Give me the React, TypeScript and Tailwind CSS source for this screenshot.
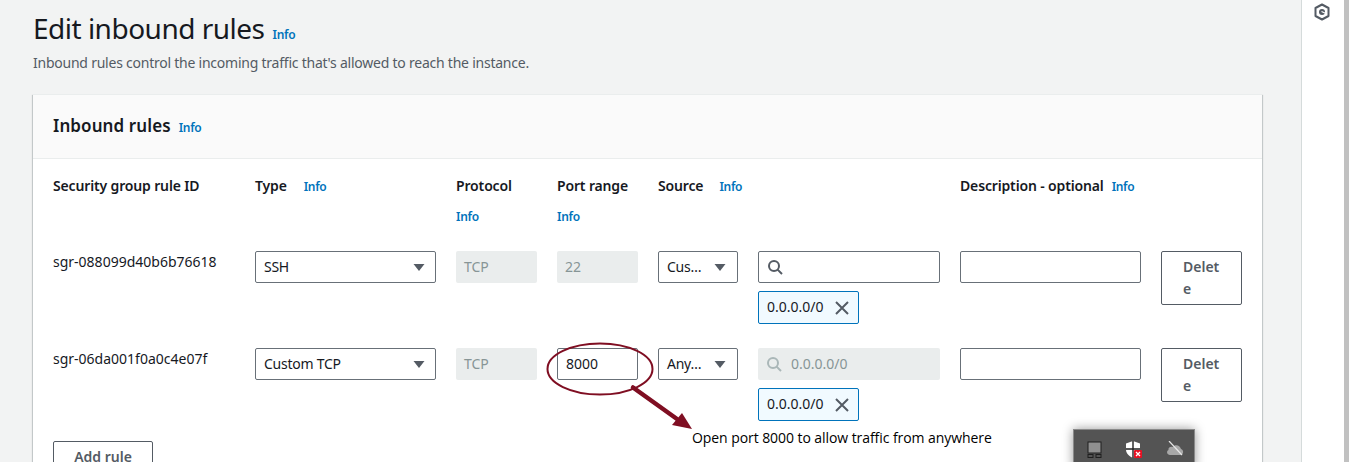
import * as React from 'react';

// Small blue "Info" link used next to every heading
const Info = ({ className = '' }: { className?: string }) => (
  <span className={`text-[12px] leading-[18px] font-semibold tracking-[-0.3px] text-[#0073bb] ${className}`}>Info</span>
);

const Caret = () => (
  <svg width="14" height="9" viewBox="0 0 14 9" className="shrink-0">
    <path d="M1.500 1h11L7 8z" fill="#545b64" />
  </svg>
);

const Select = ({ label, compact = false }: { label: string; compact?: boolean }) => (
  <div
    className={`flex h-8 items-center justify-between rounded-[2px] border border-[#687078] bg-white text-[14px] tracking-[-0.25px] text-[#16191f] ${
      compact ? 'pl-2 pr-[10px]' : 'pl-2 pr-[9px]'
    }`}
  >
    <span className="-mt-[2px]">{label}</span>
    <Caret />
  </div>
);

const ReadOnly = ({ value }: { value: string }) => (
  <div className="flex h-8 items-center rounded-[2px] bg-[#eaeded] pb-[2px] pl-2 text-[14px] text-[#879596]">{value}</div>
);

const TextBox = ({ value = '' }: { value?: string }) => (
  <div className="flex h-8 items-center rounded-[2px] border border-[#687078] bg-white pb-[2px] pl-2 text-[14px] text-[#16191f]">
    {value}
  </div>
);

const Search = ({ color }: { color: string }) => (
  <svg width="16" height="16" viewBox="0 0 16 16" fill="none" stroke={color} strokeWidth="2" className="shrink-0">
    <circle cx="7" cy="7" r="5" />
    <path d="M10.600 10.600 15 15" />
  </svg>
);

const SourceCell = ({ disabled = false }: { disabled?: boolean }) => (
  <div className="flex flex-col gap-2">
    {disabled ? (
      <div className="flex h-8 items-center gap-[9px] rounded-[2px] bg-[#eaeded] pl-2 text-[14px] text-[#879596]">
        <Search color="#aab7b8" />
        <span className="-mt-[2px]">0.0.0.0/0</span>
      </div>
    ) : (
      <div className="flex h-8 items-center rounded-[2px] border border-[#687078] bg-white pl-2">
        <Search color="#545b64" />
      </div>
    )}
    <div className="flex h-[33px] w-[101px] items-center gap-[11px] rounded-[2px] border border-[#0073bb] bg-[#f1faff] pl-2 text-[14px] text-[#16191f]">
      <span className="-mt-[2px]">0.0.0.0/0</span>
      <svg width="14" height="14" viewBox="0 0 14 14" fill="none" stroke="#545b64" strokeWidth="2" className="shrink-0">
        <path d="M1 1l12 12M13 1 1 13" />
      </svg>
    </div>
  </div>
);

const DeleteButton = () => (
  <div className="h-[54px] rounded-[2px] border border-[#545b64] bg-white pl-[21px] pr-[20px] pt-[4px] text-[14px] leading-[22px] font-semibold break-all text-[#545b64]">
    Delete
  </div>
);

const Heading = ({ children }: { children: React.ReactNode }) => (
  <span className="text-[14px] leading-[20px] font-semibold tracking-[-0.15px] text-[#16191f]">{children}</span>
);

const RuleRow = ({
  id,
  type,
  port,
  source,
  portEditable,
  sourceDisabled,
}: {
  id: string;
  type: string;
  port: string;
  source: string;
  portEditable?: boolean;
  sourceDisabled?: boolean;
}) => (
  <>
    <div className="pt-[1px] text-[14px] leading-[20px] text-[#16191f]">{id}</div>
    <Select label={type} />
    <ReadOnly value="TCP" />
    {portEditable ? <TextBox value={port} /> : <ReadOnly value={port} />}
    <Select label={source} compact />
    <SourceCell disabled={sourceDisabled} />
    <TextBox />
    <DeleteButton />
  </>
);

export default function App() {
  return (
    <div className="relative flex h-[462px] w-[1349px] overflow-hidden bg-[#f2f3f3] font-['Noto_Sans','Open_Sans',sans-serif]">
      <main className="w-[1301px] shrink-0 pl-[33px] pr-[39px]">
        <div className="flex items-baseline gap-[8px] pt-[8px]">
          <h1 className="text-[28px] leading-[40px] font-normal tracking-[-0.5px] text-[#16191f]">Edit inbound rules</h1>
          <Info />
        </div>
        <p className="mt-[5px] text-[14px] leading-[20px] tracking-[-0.235px] text-[#545b64]">
          Inbound rules control the incoming traffic that's allowed to reach the instance.
        </p>

        <section className="mt-[21px] h-[400px] border-t border-t-[#eaeded] bg-white shadow-[0_1px_1px_0_rgba(0,28,36,0.3),1px_1px_1px_0_rgba(0,28,36,0.15),-1px_1px_1px_0_rgba(0,28,36,0.15)]">
          <div className="flex h-[64px] items-center gap-2 border-b border-[#eaeded] bg-[#fafafa] pb-[2px] pl-[20px]">
            <h2 className="text-[17px] leading-[22px] font-semibold tracking-[0.1px] text-[#16191f]">Inbound rules</h2>
            <Info className="mt-[4px]" />
          </div>

          <div className="grid grid-cols-[182px_181px_81px_81px_80px_182px_181px_81px] gap-x-[20px] pl-[20px] pt-[17px]">
            <Heading>Security group rule ID</Heading>
            <div className="flex items-start gap-[17px]">
              <Heading>Type</Heading>
              <Info className="mt-[2px]" />
            </div>
            <div className="flex flex-col gap-[12px]">
              <Heading>Protocol</Heading>
              <Info />
            </div>
            <div className="flex flex-col gap-[12px]">
              <Heading>Port range</Heading>
              <Info />
            </div>
            <div className="flex items-start gap-[16px] whitespace-nowrap">
              <Heading>Source</Heading>
              <Info className="mt-[2px]" />
            </div>
            <div />
            <div className="flex items-start gap-2 whitespace-nowrap">
              <Heading>Description - optional</Heading>
              <Info className="mt-[2px]" />
            </div>
            <div />

            <div className="col-span-8 h-[25px]" />
            <RuleRow id="sgr-088099d40b6b76618" type="SSH" port="22" source="Cus…" />
            <div className="col-span-8 h-[24px]" />
            <RuleRow
              id="sgr-06da001f0a0c4e07f"
              type="Custom TCP"
              port="8000"
              source="Any…"
              portEditable
              sourceDisabled
            />
          </div>

          <div className="mt-[20px] ml-[20px] flex h-[40px] w-[100px] justify-center rounded-[2px] border border-[#545b64] bg-white pt-[5px] text-[14px] leading-[20px] font-semibold text-[#545b64]">
            Add rule
          </div>
        </section>
      </main>

      {/* Right-hand tools rail */}
      <aside className="flex w-[43px] shrink-0 justify-center border-l border-[#d5dbdb] bg-white pt-[3px]">
        <svg width="16" height="18" viewBox="0 0 16 18" fill="none" className="mr-[2px]">
          <path d="M8 1.500 14.500 5v8L8 16.500 1.500 13V5z" stroke="#545b64" strokeWidth="2" strokeLinejoin="round" />
          <circle cx="8" cy="9" r="3" fill="#545b64" />
          <path d="M7.500 8.500 12 10.500" stroke="#fff" strokeWidth="1.200" />
        </svg>
      </aside>
      <div className="w-[5px] shrink-0 bg-[#c1c1c1]" />

      {/* Screenshot annotation drawn over the form */}
      <svg width="180" height="110" viewBox="0 0 180 110" fill="none" className="absolute left-[540px] top-[335px]">
        <ellipse cx="60" cy="34" rx="52.500" ry="25.500" stroke="#7f0e22" strokeWidth="2" />
        <path d="M93 52.500 137 84" stroke="#7f0e22" strokeWidth="4.500" strokeLinecap="round" />
        <path d="M152 94 132 90 142 78z" fill="#7f0e22" />
      </svg>
      <span className="absolute left-[692px] top-[428px] font-['Open_Sans','Noto_Sans',sans-serif] text-[14px] leading-[20px] tracking-[-0.07px] text-black">
        Open port 8000 to allow traffic from anywhere
      </span>

      {/* Windows tray popup overlapping the bottom edge */}
      <div className="absolute left-[1073px] top-[429px] flex h-[40px] w-[122px] items-start gap-[22px] border border-[#8a8a8a] bg-[#545454] pl-[13px] pt-[11px] shadow-[0_0_10px_rgba(0,0,0,0.4)]">
        <svg width="16" height="17" viewBox="0 0 16 17">
          <rect x="1" y="1" width="13" height="11" fill="#8f8f8f" stroke="#1f1f1f" strokeWidth="1" />
          <rect x="1" y="13.500" width="5" height="3" fill="none" stroke="#1f1f1f" />
          <rect x="9" y="13.500" width="5" height="3" fill="none" stroke="#1f1f1f" />
        </svg>
        <svg width="18" height="17" viewBox="0 0 18 17">
          <path d="M8 0 15 2.500V8.500c0 4-3 6.500-7 8.500-4-2-7-4.500-7-8.500V2.500z" fill="#fff" />
          <path d="M8 0V17M1 8H15" stroke="#222" strokeWidth="1.400" />
          <rect x="9" y="9" width="8" height="8" rx="1" fill="#e81123" />
          <path d="M11 11l4 4M15 11l-4 4" stroke="#fff" strokeWidth="1.300" />
        </svg>
        <svg width="18" height="15" viewBox="0 0 18 15" className="ml-[1px]">
          <path d="M4 14h10c4 0 4-5 1-6-1-4-6-5-8-2-3-1-5 1-4.500 3C0 10 1 14 4 14z" fill="#a8a8a8" />
          <path d="M3 0 16 14" stroke="#e8e8e8" strokeWidth="1.200" />
        </svg>
      </div>
    </div>
  );
}
